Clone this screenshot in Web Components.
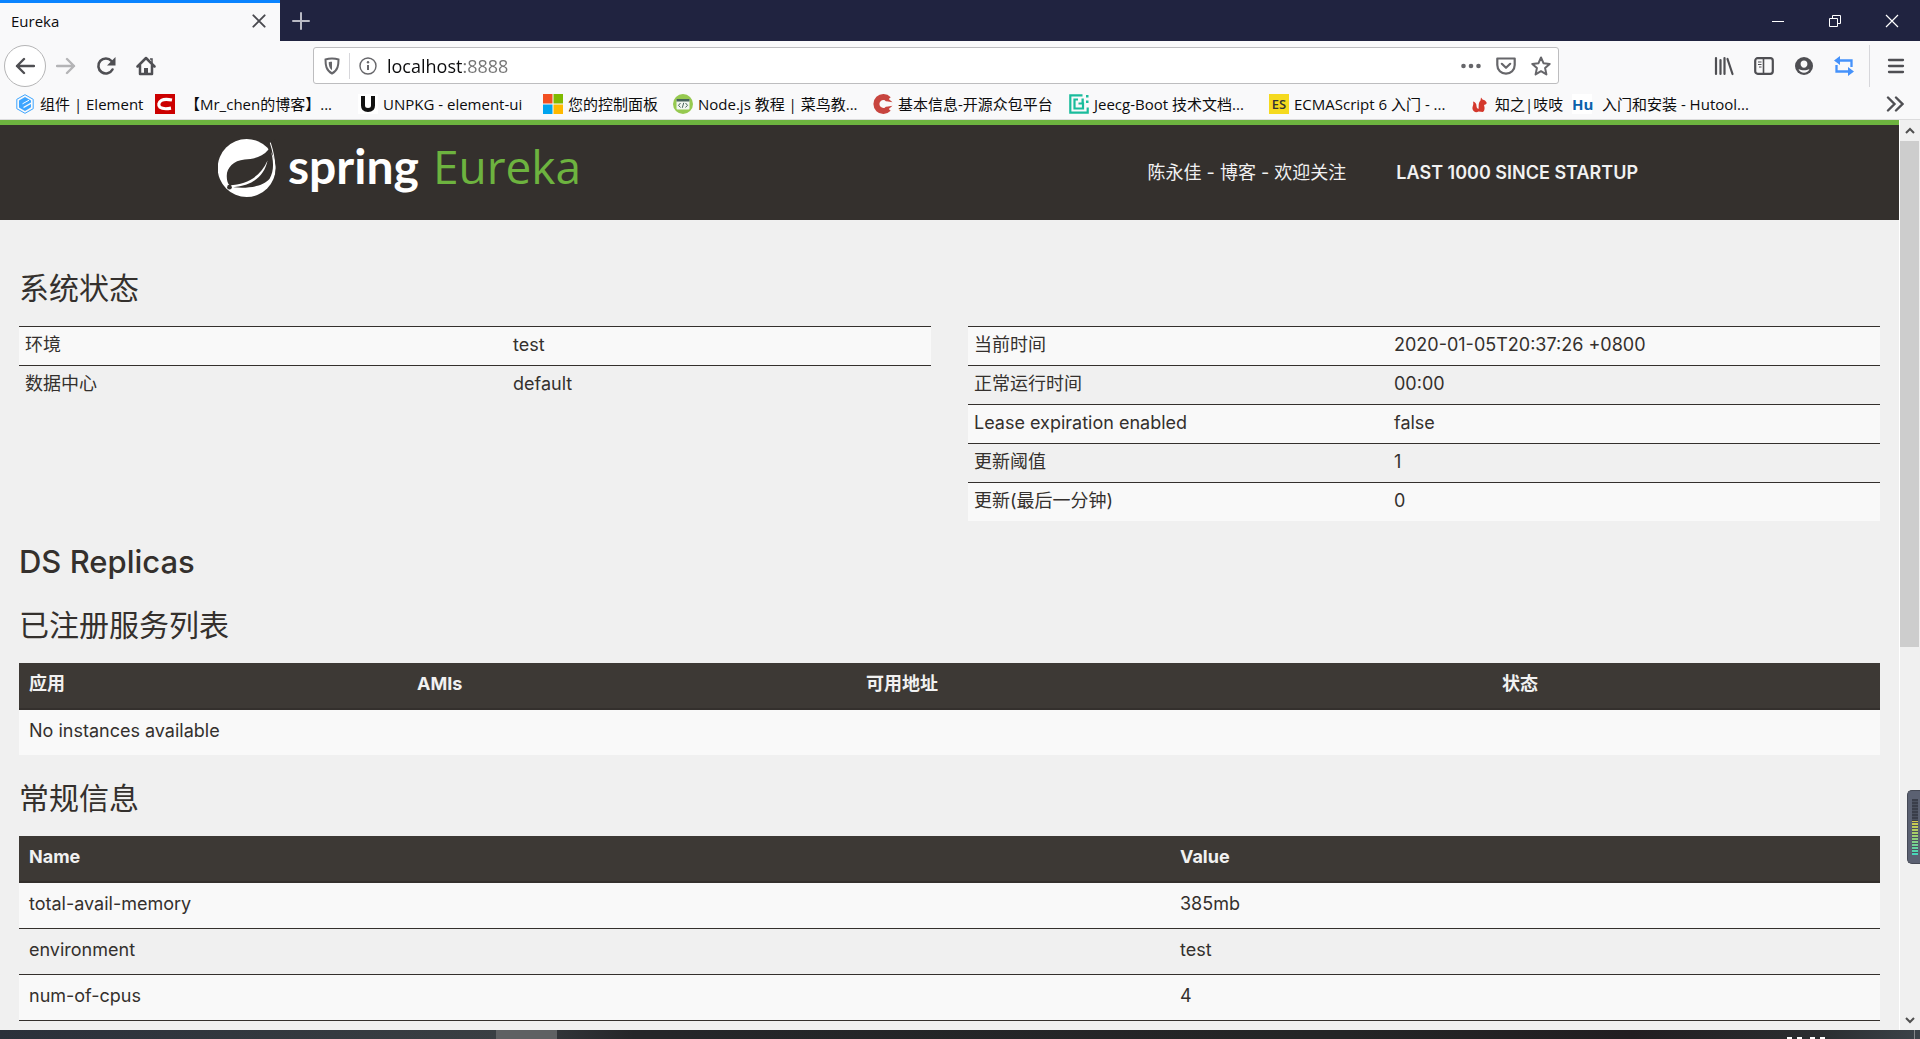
<!DOCTYPE html>
<html lang="zh-CN">
<head>
<meta charset="utf-8">
<title>Eureka</title>
<style>
  body {
    margin: 0;
    height: 100vh;
    overflow: hidden;
    display: flex;
    flex-direction: column;
    background: #f0f0f0;
    font-family: "Open Sans", "Noto Sans CJK SC", sans-serif;
    font-size: 15px;
  }
  #viewport {
    flex: 1;
    min-height: 0;
    display: flex;
  }
</style>
</head>
<body>
<tab-strip><page-tab>Eureka</page-tab></tab-strip>
<nav-toolbar></nav-toolbar>
<bookmarks-bar>
  <book-mark data-icon="element">组件 | Element</book-mark>
  <book-mark data-icon="csdn">【Mr_chen的博客】...</book-mark>
  <book-mark data-icon="unpkg">UNPKG - element-ui</book-mark>
  <book-mark data-icon="microsoft">您的控制面板</book-mark>
  <book-mark data-icon="runoob">Node.js 教程 | 菜鸟教...</book-mark>
  <book-mark data-icon="oschina">基本信息-开源众包平台</book-mark>
  <book-mark data-icon="jeecg">Jeecg-Boot 技术文档...</book-mark>
  <book-mark data-icon="es">ECMAScript 6 入门 - ...</book-mark>
  <book-mark data-icon="squirrel">知之|吱吱</book-mark>
  <book-mark data-icon="hutool">入门和安装 - Hutool...</book-mark>
</bookmarks-bar>
<div id="viewport">
  <eureka-page></eureka-page>
  <scroll-bar></scroll-bar>
</div>
<task-bar></task-bar>

<script>
// Icon drawings: [viewBox, markup]
const ICONS = {
  close: ['0 0 16 16', '<path d="M3 3l10 10M13 3L3 13" stroke="currentColor" stroke-width="1.7" stroke-linecap="round"/>'],
  plus: ['0 0 18 18', '<path d="M9 1v16M1 9h16" stroke="currentColor" stroke-width="2" stroke-linecap="round"/>'],
  minimize: ['0 0 14 14', '<path d="M1 7.5h12" stroke="currentColor"/>'],
  restore: ['0 0 14 14', '<path d="M1.5 4.500h8v8h-8zM4.500 4.500v-3h8v8h-3" stroke="currentColor"/>'],
  exit: ['0 0 14 14', '<path d="M1 1l12 12M13 1L1 13" stroke="currentColor" stroke-width="1.200"/>'],
  back: ['0 0 20 20', '<path d="M19 10H2M9 3l-7 7 7 7" stroke="currentColor" stroke-width="2.400" stroke-linecap="round" stroke-linejoin="round"/>'],
  forward: ['0 0 20 20', '<path d="M1 10h17M11 3l7 7-7 7" stroke="currentColor" stroke-width="2.400" stroke-linecap="round" stroke-linejoin="round"/>'],
  reload: ['0 0 20 20', '<path d="M16.500 13.500A7.500 7.500 0 1 1 15.500 5" stroke="currentColor" stroke-width="2.600" stroke-linecap="round"/><path d="M19.500 1v8.500H11z" fill="currentColor"/>'],
  home: ['0 0 20 20', '<path d="M1.500 10.500L10 2l8.500 8.500M4 9.500V18h12V9.500" stroke="currentColor" stroke-width="2.500" stroke-linecap="round" stroke-linejoin="round"/><path d="M8 18v-6h4v6z" fill="currentColor"/><path d="M14 3h2v4" stroke="currentColor" stroke-width="1.500"/>'],
  shield: ['0 0 18 18', '<path d="M9 1.500c2 0 4.500.3 6.500 1 0 5.500-.5 11-6.500 14C3 13.500 2.500 8 2.500 2.500c2-.7 4.500-1 6.500-1z" stroke="currentColor" stroke-width="2"/><path d="M9 4.700c-1.300 0-2.300.1-3.300.5.1 3.500.8 6.300 3.300 8z" fill="currentColor"/>'],
  info: ['0 0 18 18', '<circle cx="9" cy="9" r="8" stroke="currentColor" stroke-width="1.400"/><path d="M9 8v5" stroke="currentColor" stroke-width="2"/><circle cx="9" cy="5.300" r="1.200" fill="currentColor"/>'],
  dots: ['0 0 20 20', '<g fill="currentColor"><circle cx="2.500" cy="10" r="2.300"/><circle cx="10" cy="10" r="2.300"/><circle cx="17.500" cy="10" r="2.300"/></g>'],
  pocket: ['0 0 20 20', '<path d="M1.300 2.500h17.400V9c0 5-3.900 8.700-8.700 8.700S1.300 14 1.300 9z" stroke="currentColor" stroke-width="2.200" stroke-linejoin="round"/><path d="M5.800 7.800L10 11.800l4.200-4" stroke="currentColor" stroke-width="2.200" stroke-linecap="round" stroke-linejoin="round"/>'],
  star: ['0 0 20 20', '<path d="M10 1.500l2.600 5.800 6.100.6-4.600 4.200 1.300 6.300-5.400-3.200-5.400 3.200 1.300-6.300L1.300 7.900l6.100-.6z" stroke="currentColor" stroke-width="2" stroke-linejoin="round"/>'],
  library: ['0 0 20 20', '<path d="M2 2v16M6.500 4v14M10.500 2v16" stroke="currentColor" stroke-width="2.200" stroke-linecap="round"/><path d="M13.500 3l5 15" stroke="currentColor" stroke-width="2.200" stroke-linecap="round"/>'],
  sidebar: ['0 0 20 20', '<rect x="1.200" y="2.200" width="17.600" height="15.600" rx="2.500" stroke="currentColor" stroke-width="2.200"/><path d="M9.500 3v14" stroke="currentColor" stroke-width="1.600"/><path d="M4 6h3.500M4 8.500h3.500M5 11h2.500" stroke="currentColor" stroke-width="1.200"/>'],
  account: ['0 0 20 20', '<circle cx="10" cy="10" r="9" fill="currentColor"/><path d="M10 4.500c2.200 0 3.400 1.500 3.400 3.500 0 1.900-1.400 3.800-3.400 3.800S6.600 9.900 6.600 8c0-2 1.200-3.500 3.400-3.500zM4.500 13c1.500 1 3.500 1.300 5.500 1.300s4-.3 5.500-1.300c-1 2.500-3 3.700-5.500 3.700S5.500 15.500 4.500 13z" fill="#f9f9fa"/>'],
  sync: ['0 0 20 20', '<path d="M5 4.500h12.500V11M2.500 9v6.500H15" stroke="currentColor" stroke-width="2.300"/><path d="M6 0v9L0 4.500zM14 11v9l6-4.500z" fill="currentColor"/>'],
  menu: ['0 0 20 20', '<path d="M3 4h14M3 10h14M3 16h14" stroke="currentColor" stroke-width="2.300" stroke-linecap="round"/>'],
  more: ['0 0 18 18', '<path d="M2 2.500L8.500 9 2 15.500M10 2.500L16.500 9 10 15.500" stroke="currentColor" stroke-width="2.400" stroke-linecap="round"/>'],
  up: ['0 0 10 10', '<path d="M1 7l4-4 4 4" stroke="currentColor" stroke-width="2"/>'],
  down: ['0 0 10 10', '<path d="M1 3l4 4 4-4" stroke="currentColor" stroke-width="2"/>'],

  element: ['0 0 20 20', '<path d="M10 .7l8.200 4.600v9.400L10 19.300l-8.200-4.600V5.300z" stroke="#3da5ff"/><path d="M10 3l6 3.400v2.100L8.500 12.700v1.500L16 10v2.600c0 .8-.4 1.200-1 1.500l-5 2.900-6-3.400V6.400z" fill="#3da5ff"/><path d="M7.500 9.800L14 6.200" stroke="#fff"/>'],
  csdn: ['0 0 20 20', '<path fill="#c00" d="M0 0h20v20H0z"/><path d="M17 6c-4-.8-8-1-10.500.3-3 1.600-3.500 5.200-1.500 7 2.500 1.800 7 1.600 11 .9" stroke="#fff" stroke-width="3.200"/>'],
  unpkg: ['0 0 20 20', '<path fill="#fff" d="M0 0h20v20H0z"/><path d="M5 2v9.500c0 3.200 1.800 4.500 5 4.500s5-1.300 5-4.500V2" stroke="#111" stroke-width="4"/>'],
  microsoft: ['0 0 20 20', '<path fill="#f25022" d="M0 0h9.500v9.500H0z"/><path fill="#7fba00" d="M10.500 0H20v9.500h-9.500z"/><path fill="#00a4ef" d="M0 10.500h9.500V20H0z"/><path fill="#ffb900" d="M10.500 10.500H20V20h-9.500z"/>'],
  runoob: ['0 0 20 20', '<circle cx="10" cy="10" r="10" fill="#96c950"/><rect x="3.500" y="5" width="13" height="10.500" rx="1" fill="#f2f6f0"/><path fill="#46625a" d="M3.500 5h13v2.500h-13z"/><path d="M7.500 9l-2 2.300 2 2.200M12.500 9l2 2.300-2 2.200M10.700 8.800l-1.400 5" stroke="#46625a"/>'],
  oschina: ['0 0 20 20', '<path d="M15.500 5.200A7 7 0 1 0 15.500 14.800" stroke="#c8453f" stroke-width="6"/><path d="M19.500 8.200L12 7l2-3.500zM19.500 11.800L12 13l2 3.500z" fill="#c8453f"/>'],
  jeecg: ['0 0 20 20', '<path d="M13.500 1.300H1.300v17.400h17.400V13.500M9 5.500H5.500v9h8.500V9.500H9.500" stroke="#1abc9c" stroke-width="2.200"/><path fill="#1abc9c" d="M12.500 4.400h2.300v5h-2.300zM17 1h2.500v2.500H17zM17 6.500h2.500V9H17z"/>'],
  squirrel: ['0 0 20 20', '<path d="M8.500 17.500C6.500 19 3 18 2.500 15c-.3-3 1.500-4 .5-7.500 2 .3 3.500 2 3.500 4.500 0 1.500.8 2.500 2 3 .5-3-.5-6 2-8.500l.5-3 1.800 2.200c2 .2 3.200 1.500 4 3.300-.8 1.600-2 1.800-2.800 2 1 3 .8 5.500-1 7z" fill="#d4382c"/>'],

  leaf: ['54 74 172 172', '<circle cx="139" cy="160" r="86" fill="#fff"/><path d="M209 82L230 74v90l-10 28c10-29 7-63-6-93z" fill="#34302d"/><path d="M203 106c-18 22-44 27-70 29-34 3-54 26-53 50 0 12 3 21 8 26 51-3 92-24 113-73-10 48-46 74-102 79 40 4 87 0 108-25 14-24 13-54 1-92-2-2-3 2-5 6z" fill="#34302d"/><path d="M209 85c11 34 21 76 5 109" stroke="#fff" stroke-width="3"/><circle cx="88" cy="217" r="7" fill="#34302d"/>']
};

class UiIcon extends HTMLElement {
  constructor() {
    super();
    this.attachShadow({ mode: "open" });
  }

  connectedCallback() {
    const [viewBox, markup] = ICONS[this.getAttribute('name')];
    this.shadowRoot.innerHTML = /*html*/`
<style>
  :host { display: block; width: 20px; height: 20px; flex: none; }
  svg { display: block; width: 100%; height: 100%; }
</style>
<svg viewBox="${viewBox}" fill="none" aria-hidden="true">${markup}</svg>`;
  }
}
customElements.define('ui-icon', UiIcon);

// Small helper for the elements that have static markup only
function define(name, html) {
  const template = document.createElement('template');
  template.innerHTML = html;
  customElements.define(name, class extends HTMLElement {
    constructor() {
      super();
      this.attachShadow({ mode: "open" }).appendChild(template.content.cloneNode(true));
    }
  });
}

const buttonReset = /*css*/`
  button {
    display: flex;
    align-items: center;
    justify-content: center;
    border: 0;
    padding: 0;
    background: none;
    color: inherit;
    font: inherit;
  }
`;

define('tab-strip', /*html*/`
<style>
  ${buttonReset}
  :host {
    display: flex;
    height: 41px;
    background: #202340;
    color: #fff;
  }
  .new { width: 42px; color: #b9bac4; }
  .new ui-icon { width: 18px; height: 18px; }
  .window { display: flex; margin-left: auto; }
  .window button { width: 57px; }
  .window ui-icon { width: 14px; height: 14px; }
</style>
<slot></slot>
<button class="new" aria-label="New tab"><ui-icon name="plus"></ui-icon></button>
<div class="window">
  <button aria-label="Minimize"><ui-icon name="minimize"></ui-icon></button>
  <button aria-label="Restore"><ui-icon name="restore"></ui-icon></button>
  <button aria-label="Close"><ui-icon name="exit"></ui-icon></button>
</div>
`);

define('page-tab', /*html*/`
<style>
  ${buttonReset}
  :host {
    display: flex;
    align-items: center;
    justify-content: space-between;
    box-sizing: border-box;
    width: 280px;
    padding: 0 12px 3px 11px;
    border-top: 3px solid #0a84ff;
    background: #f9f9fa;
    color: #0c0c0d;
  }
  button { color: #4a4a4f; }
  ui-icon { width: 18px; height: 18px; }
</style>
<slot></slot>
<button aria-label="Close tab"><ui-icon name="close"></ui-icon></button>
`);

define('nav-toolbar', /*html*/`
<style>
  ${buttonReset}
  :host {
    display: flex;
    align-items: center;
    height: 49px;
    padding: 0 4px;
    background: #f9f9fa;
    color: #4f4f53;
  }
  button { width: 40px; height: 40px; }
  .back {
    box-sizing: border-box;
    width: 42px;
    height: 42px;
    border: 1px solid #b5b5b6;
    border-radius: 50%;
    background: #fff;
  }
  .forward { color: #b4b4b6; }
  .address {
    flex: 1;
    display: flex;
    align-items: center;
    box-sizing: border-box;
    height: 37px;
    margin: 0 145px 0 147px;
    border: 1px solid #bdbdbf;
    border-radius: 3px;
    background: #fff;
    color: #66666a;
  }
  .address button { width: 35px; height: 35px; }
  .address ui-icon.small { width: 18px; height: 18px; }
  .line { width: 1px; height: 26px; background: #d7d7db; }
  input {
    flex: 1;
    height: 30px;
    padding: 0 0 0 2px;
    border: 0;
    outline: 0;
    font: inherit;
    font-size: 18px;
    /* the host name is darker than the port */
    color: transparent;
    background: linear-gradient(90deg, #0c0c0d 79px, #737373 79px);
    -webkit-background-clip: text;
    background-clip: text;
  }
  .sync { color: #4592fb; }
  .divider { width: 1px; height: 42px; margin: 0 6px 0 5px; background: #d7d7db; }
</style>
<button class="back" aria-label="Back"><ui-icon name="back"></ui-icon></button>
<button class="forward" aria-label="Forward"><ui-icon name="forward"></ui-icon></button>
<button aria-label="Reload"><ui-icon name="reload"></ui-icon></button>
<button aria-label="Home"><ui-icon name="home"></ui-icon></button>
<div class="address">
  <button aria-label="Tracking protection"><ui-icon class="small" name="shield"></ui-icon></button>
  <div class="line"></div>
  <button aria-label="Site information"><ui-icon class="small" name="info"></ui-icon></button>
  <input type="text" aria-label="Address" value="localhost:8888" spellcheck="false">
  <button aria-label="Page actions"><ui-icon name="dots"></ui-icon></button>
  <button aria-label="Save to Pocket"><ui-icon name="pocket"></ui-icon></button>
  <button aria-label="Bookmark this page"><ui-icon name="star"></ui-icon></button>
</div>
<button aria-label="Library"><ui-icon name="library"></ui-icon></button>
<button aria-label="Sidebars"><ui-icon name="sidebar"></ui-icon></button>
<button aria-label="Account"><ui-icon name="account"></ui-icon></button>
<button class="sync" aria-label="Sync"><ui-icon name="sync"></ui-icon></button>
<div class="divider"></div>
<button aria-label="Menu"><ui-icon name="menu"></ui-icon></button>
`);

define('bookmarks-bar', /*html*/`
<style>
  ${buttonReset}
  :host {
    display: grid;
    grid-template-columns: 140px 203px 185px 130px 200px 196px 200px 201px 102px 1fr 40px;
    align-items: center;
    height: 27px;
    padding: 0 5px 2px 15px;
    border-bottom: 1px solid #dcdcdd;
    background: #f9f9fa;
    color: #0c0c0d;
  }
  button { height: 27px; color: #4f4f53; }
  ui-icon { width: 18px; height: 18px; }
</style>
<slot></slot>
<button aria-label="More bookmarks"><ui-icon name="more"></ui-icon></button>
`);

class BookMark extends HTMLElement {
  constructor() {
    super();
    this.attachShadow({ mode: "open" });
  }

  connectedCallback() {
    const name = this.dataset.icon;
    const badges = { es: 'ES', hutool: 'Hu' };
    const icon = badges[name]
      ? `<span class="badge ${name}">${badges[name]}</span>`
      : `<ui-icon name="${name}"></ui-icon>`;
    this.shadowRoot.innerHTML = /*html*/`
<style>
  :host { display: block; white-space: nowrap; }
  a {
    display: flex;
    align-items: center;
    gap: 5px;
    color: inherit;
    text-decoration: none;
  }
  .badge {
    width: 20px;
    line-height: 20px;
    text-align: center;
    font-size: 13px;
    font-weight: 600;
  }
  .es { background: #f5da1f; color: #333; }
  .hutool { background: #fff; color: #0b62ab; font-size: 15px; font-weight: 700; }
  .hutool, ui-icon[name="csdn"] { margin-right: 5px; }
</style>
<a href="#">${icon}<slot></slot></a>`;
  }
}
customElements.define('book-mark', BookMark);

define('eureka-header', /*html*/`
<style>
  :host {
    display: block;
    border-top: 5px solid #6db33f;
    background: #34302d;
    color: #f1f1f1;
  }
  .container {
    display: flex;
    align-items: center;
    justify-content: space-between;
    box-sizing: border-box;
    max-width: 1463px;
    height: 95px;
    margin: 0 auto;
    padding-right: 43px;
  }
  a { color: inherit; text-decoration: none; }
  .logo {
    display: flex;
    align-items: center;
    height: 86px;
    align-self: flex-start;
    line-height: 50px;
  }
  .logo ui-icon { width: 58px; height: 58px; margin-right: 12px; }
  .name {
    display: flex;
    align-items: baseline;
    gap: 14px;
    padding-bottom: 6px;
    font-family: "Open Sans", sans-serif;
    font-size: 46px;
    color: #6db33f;
  }
  .spring { font: 700 48px Lato, sans-serif; color: #fff; }
  nav {
    display: flex;
    align-items: center;
    gap: 50px;
    font: 600 18px/24px Inter, "Noto Sans CJK SC", sans-serif;
  }
  .cjk { font-weight: 400; }
</style>
<div class="container">
  <a class="logo" href="#"><ui-icon name="leaf"></ui-icon><span class="name"><span class="spring">spring</span><span>Eureka</span></span></a>
  <nav>
    <a class="cjk" href="#">陈永佳 - 博客 - 欢迎关注</a>
    <a href="#">LAST 1000 SINCE STARTUP</a>
  </nav>
</div>
`);

// Table built from JSON in data-head, data-rows and data-widths
class DataTable extends HTMLElement {
  constructor() {
    super();
    this.attachShadow({ mode: "open" });
  }

  connectedCallback() {
    const read = name => JSON.parse(this.dataset[name] || '[]');
    const head = read('head');
    const rows = read('rows');
    const cols = read('widths').map(width => `<col style="width: ${width}px">`).join('');
    const th = head.map(text => `<th scope="col">${text}</th>`).join('');
    const span = row => row.length < head.length ? ` colspan="${head.length}"` : '';
    const body = rows.map(row => `<tr>${row.map(text => `<td${span(row)}>${text}</td>`).join('')}</tr>`).join('');

    this.shadowRoot.innerHTML = /*html*/`
<style>
  :host { display: block; font-size: 18px; line-height: 24px; }
  table {
    width: 100%;
    table-layout: fixed;
    border-spacing: 0;
    text-align: left;
  }
  th {
    padding: 9px 10px 12px;
    border-bottom: 2px solid #34302d;
    background: #3d3935;
    color: #f1f1f1;
    font-weight: 700;
  }
  td { padding: 9px 10px 12px; }
  tr:nth-child(odd) td { background: #f9f9f9; }
  :host([lined]) td { border-bottom: 1px solid #34302d; }
  :host([compact]) td { padding: 6px 6px 8px; border-top: 1px solid #34302d; }
</style>
<table>
  <colgroup>${cols}</colgroup>
  ${th && `<thead><tr>${th}</tr></thead>`}
  <tbody>${body}</tbody>
</table>`;
  }
}
customElements.define('data-table', DataTable);

define('eureka-page', /*html*/`
<style>
  :host {
    display: block;
    flex: 1;
    min-width: 0;
    overflow: hidden;
    color: #34302d;
    font-family: Inter, "Noto Sans CJK SC", sans-serif;
  }
  main { padding: 46px 19px 0; }
  h1 {
    margin: 0;
    font-size: 30px;
    line-height: 44px;
    font-weight: 400;
  }
  h1.latin { font-size: 31px; font-weight: 500; }
  .status {
    display: grid;
    grid-template-columns: 1fr 1fr;
    align-items: start;
    gap: 37px;
    margin: 16px 0 19px;
  }
  h1.latin + h1 { margin-top: 19px; }
  data-table { margin: 16px 0 21px; }
  .status data-table { margin: 0; }
</style>
<eureka-header></eureka-header>
<main>
  <h1>系统状态</h1>
  <div class="status">
    <data-table compact data-widths="[488, 424]"
      data-rows='[["环境", "test"], ["数据中心", "default"]]'></data-table>
    <data-table compact data-widths="[420, 492]"
      data-rows='[["当前时间", "2020-01-05T20:37:26 +0800"], ["正常运行时间", "00:00"], ["Lease expiration enabled", "false"], ["更新阈值", "1"], ["更新(最后一分钟)", "0"]]'></data-table>
  </div>
  <h1 class="latin">DS Replicas</h1>
  <h1>已注册服务列表</h1>
  <data-table data-widths="[388, 449, 636, 388]"
    data-head='["应用", "AMIs", "可用地址", "状态"]'
    data-rows='[["No instances available"]]'></data-table>
  <h1>常规信息</h1>
  <data-table lined data-widths="[1151, 710]"
    data-head='["Name", "Value"]'
    data-rows='[["total-avail-memory", "385mb"], ["environment", "test"], ["num-of-cpus", "4"]]'></data-table>
</main>
`);

define('scroll-bar', /*html*/`
<style>
  ${buttonReset}
  :host {
    display: flex;
    flex-direction: column;
    position: relative;
    width: 20px;
    border-left: 1px solid #fff;
    background: #f0f0f0;
    color: #505050;
  }
  button { height: 21px; }
  ui-icon { width: 10px; height: 10px; }
  .track { flex: 1; }
  .thumb { width: 19px; height: calc(100% * 7 / 12); background: #cdcdcd; }
  /* level meter that floats over the window edge */
  .meter {
    position: absolute;
    right: 0;
    top: 670px;
    box-sizing: border-box;
    width: 13px;
    height: 74px;
    padding: 8px 2px 8px 4px;
    border: 1px solid #454955;
    border-right: 0;
    border-radius: 5px 0 0 5px;
    background: #5b6172;
  }
  .level {
    height: 100%;
    background:
      repeating-linear-gradient(transparent 0 2px, #4b515f 2px 3px),
      linear-gradient(#3a3e4a 39%, #d4c84a 39%, #9fd06e 65%, #44d6bd);
  }
</style>
<button aria-label="Scroll up"><ui-icon name="up"></ui-icon></button>
<div class="track"><div class="thumb"></div></div>
<button aria-label="Scroll down"><ui-icon name="down"></ui-icon></button>
<div class="meter"><div class="level"></div></div>
`);

define('task-bar', /*html*/`
<style>
  :host {
    display: flex;
    height: 9px;
    background: linear-gradient(90deg, #2b303a, #3a3f43 26%, #252629 33%, #242526 70%, #221e21 85%, #2b2e31 95%, #3c4349);
  }
  .window { width: 61px; margin-left: 496px; background: #5f6163; }
  /* only the tops of the clock digits reach above the screen edge */
  .clock {
    display: flex;
    gap: 5px;
    align-self: flex-end;
    margin-left: auto;
    padding-right: 89px;
  }
  .clock i { width: 5px; height: 2px; background: #fff; }
  .clock i:nth-child(3) { margin-left: 3px; }
  .edge { width: 1px; margin-right: 5px; background: #85888b; }
</style>
<div class="window"></div>
<div class="clock"><i></i><i></i><i></i><i></i></div>
<div class="edge"></div>
`);
</script>
</body>
</html>
